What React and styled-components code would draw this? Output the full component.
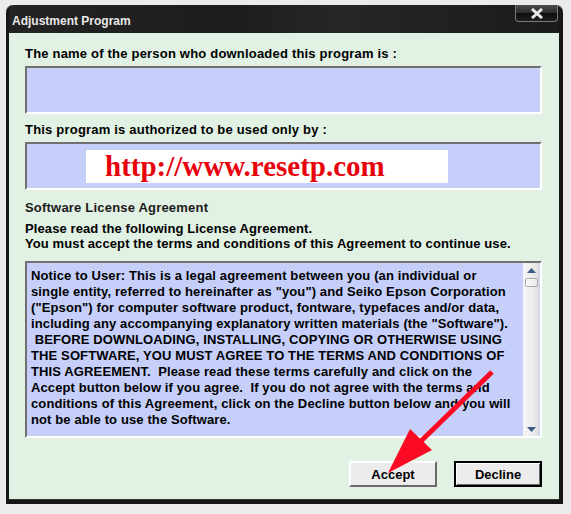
import React from "react";
import styled, { createGlobalStyle } from "styled-components";

const GlobalStyle = createGlobalStyle`
  html, body {
    margin: 0;
    padding: 0;
    background: #ebebeb;
    font-family: "Liberation Sans", Arial, sans-serif;
  }
`;

const Page = styled.div`
  position: relative;
  width: 571px;
  height: 514px;
  padding: 5px 0 0 6px;
  box-sizing: border-box;
`;

const Window = styled.div`
  width: 557px;
  height: 499px;
  box-sizing: border-box;
  background: #161616;
  border-radius: 7px 7px 0 0;
  padding: 0 4px 4px 3px;
  display: flex;
  flex-direction: column;
  box-shadow: inset 0 1px 0 #5a5a5a;
`;

const TitleBar = styled.div`
  height: 28px;
  flex-shrink: 0;
  display: flex;
  align-items: flex-start;
  justify-content: space-between;
  background: linear-gradient(90deg, #232323 0%, #1d1d1d 40%, #262626 60%, #1b1b1b 100%);
  border-radius: 6px 6px 0 0;
`;

const Title = styled.span`
  margin: 9px 0 0 3px;
  font-size: 12px;
  font-weight: bold;
  color: #e8e8e8;
`;

const CloseButton = styled.div`
  width: 43px;
  height: 17px;
  margin-right: 1px;
  display: flex;
  align-items: center;
  justify-content: center;
  background: linear-gradient(180deg, #4a4a4a 0%, #2c2c2c 50%, #0e0e0e 51%, #1e1e1e 100%);
  border: 1px solid #7a7a7a;
  border-top: none;
  border-radius: 0 0 4px 4px;
  box-sizing: border-box;
`;

const Client = styled.div`
  flex: 1;
  background: #e1f1e3;
  padding: 13px 17px 0 16px;
  display: flex;
  flex-direction: column;
  border-bottom: 1px solid #2a3a30;
`;

const Label = styled.div`
  font-size: 13px;
  line-height: 15px;
  font-weight: bold;
  color: ${(p) => (p.$light ? "#1a1a1a" : "#000")};
  margin-top: ${(p) => p.$gap || 0}px;
  letter-spacing: ${(p) => p.$spacing ?? 0.2}px;
  white-space: nowrap;
`;

const Field = styled.div`
  height: 48px;
  box-sizing: border-box;
  margin-top: 5px;
  background: #c5cffa;
  border: 2px solid;
  border-color: #707070 #ffffff #ffffff #707070;
  display: flex;
  align-items: center;
`;

const UrlBanner = styled.div`
  margin-left: 59px;
  width: 362px;
  height: 33px;
  background: #fff;
  display: flex;
  align-items: center;
  padding-left: 19px;
  box-sizing: border-box;
  font-family: "Liberation Serif", "Times New Roman", serif;
  font-weight: bold;
  font-size: 29px;
  color: #e8000b;
`;

const Notes = styled.div`
  margin-top: 6px;
  display: flex;
  flex-direction: column;
`;

const Agreement = styled.div`
  margin-top: 10px;
  height: 177px;
  box-sizing: border-box;
  background: #c5cffa;
  border: 2px solid;
  border-color: #707070 #ffffff #ffffff #707070;
  display: flex;
`;

const AgreementText = styled.div`
  flex: 1;
  padding: 5px 0 0 4px;
  font-size: 13px;
  line-height: 16px;
  font-weight: bold;
  color: #000;
  letter-spacing: 0.12px;
  white-space: pre;
  overflow: hidden;
`;

const ScrollBar = styled.div`
  width: 16px;
  margin-right: 1px;
  background: linear-gradient(90deg, #f6f6f6 0%, #ececec 60%, #dcdcdc 100%);
  display: flex;
  flex-direction: column;
  align-items: center;
  padding: 5px 0 4px;
  box-sizing: border-box;
`;

const Thumb = styled.div`
  width: 13px;
  height: 9px;
  margin-top: 5px;
  background: linear-gradient(90deg, #fdfdfd, #eaeaea);
  border: 1px solid #a8a8a8;
  border-radius: 2px;
  box-sizing: border-box;
`;

const Spacer = styled.div`
  flex: 1;
`;

const ButtonRow = styled.div`
  margin-top: 23px;
  display: flex;
  justify-content: flex-end;
  gap: 17px;
`;

const Button = styled.button`
  width: 88px;
  height: 26px;
  box-sizing: border-box;
  background: #ececec;
  font-family: "Liberation Sans", Arial, sans-serif;
  font-size: 13px;
  font-weight: bold;
  color: #000;
  padding: 0;
  border: 2px solid;
  border-color: #ffffff #6a6a6a #6a6a6a #ffffff;
  ${(p) =>
    p.$default &&
    `
    border: 2px solid #000;
    box-shadow: inset 1px 1px 0 #fff, inset -1px -1px 0 #6a6a6a;
  `}
`;

const ArrowLayer = styled.svg`
  position: absolute;
  left: 0;
  top: 0;
  pointer-events: none;
`;

const agreementLines = [
  "Notice to User: This is a legal agreement between you (an individual or",
  'single entity, referred to hereinafter as "you") and Seiko Epson Corporation',
  '("Epson") for computer software product, fontware, typefaces and/or data,',
  'including any accompanying explanatory written materials (the "Software").',
  " BEFORE DOWNLOADING, INSTALLING, COPYING OR OTHERWISE USING",
  "THE SOFTWARE, YOU MUST AGREE TO THE TERMS AND CONDITIONS OF",
  "THIS AGREEMENT.  Please read these terms carefully and click on the",
  "Accept button below if you agree.  If you do not agree with the terms and",
  "conditions of this Agreement, click on the Decline button below and you will",
  "not be able to use the Software.",
];

const App = () => {
  return (
    <Page>
      <GlobalStyle />
      <Window>
        <TitleBar>
          <Title>Adjustment Program</Title>
          <CloseButton>
            <svg width="14" height="11" viewBox="0 0 14 11">
              <path d="M2 1 L12 10 M12 1 L2 10" stroke="#e6e6e6" strokeWidth="3" />
            </svg>
          </CloseButton>
        </TitleBar>
        <Client>
          <Label>The name of the person who downloaded this program is :</Label>
          <Field />
          <Label $gap={8}>This program is authorized to be used only by :</Label>
          <Field>
            <UrlBanner>http://www.resetp.com</UrlBanner>
          </Field>
          <Label $gap={10} $light>
            Software License Agreement
          </Label>
          <Notes>
            <Label $spacing={0.1}>Please read the following License Agreement.</Label>
            <Label $spacing={0.1}>
              You must accept the terms and conditions of this Agreement to continue use.
            </Label>
          </Notes>
          <Agreement>
            <AgreementText>
              {agreementLines.map((line, i) => (
                <div key={i}>{line}</div>
              ))}
            </AgreementText>
            <ScrollBar>
              <svg width="9" height="5" viewBox="0 0 9 5">
                <path d="M4.5 0 L9 5 L0 5 Z" fill="#3c5a82" />
              </svg>
              <Thumb />
              <Spacer />
              <svg width="9" height="5" viewBox="0 0 9 5">
                <path d="M0 0 L9 0 L4.5 5 Z" fill="#3c5a82" />
              </svg>
            </ScrollBar>
          </Agreement>
          <ButtonRow>
            <Button>Accept</Button>
            <Button $default>Decline</Button>
          </ButtonRow>
        </Client>
      </Window>
      <ArrowLayer width="571" height="514">
        <line x1="492" y1="372" x2="418" y2="444" stroke="#fa0a23" strokeWidth="5" />
        <path d="M388 473 L410 429 L432 450 Z" fill="#fa0a23" />
      </ArrowLayer>
    </Page>
  );
};

export default App;
